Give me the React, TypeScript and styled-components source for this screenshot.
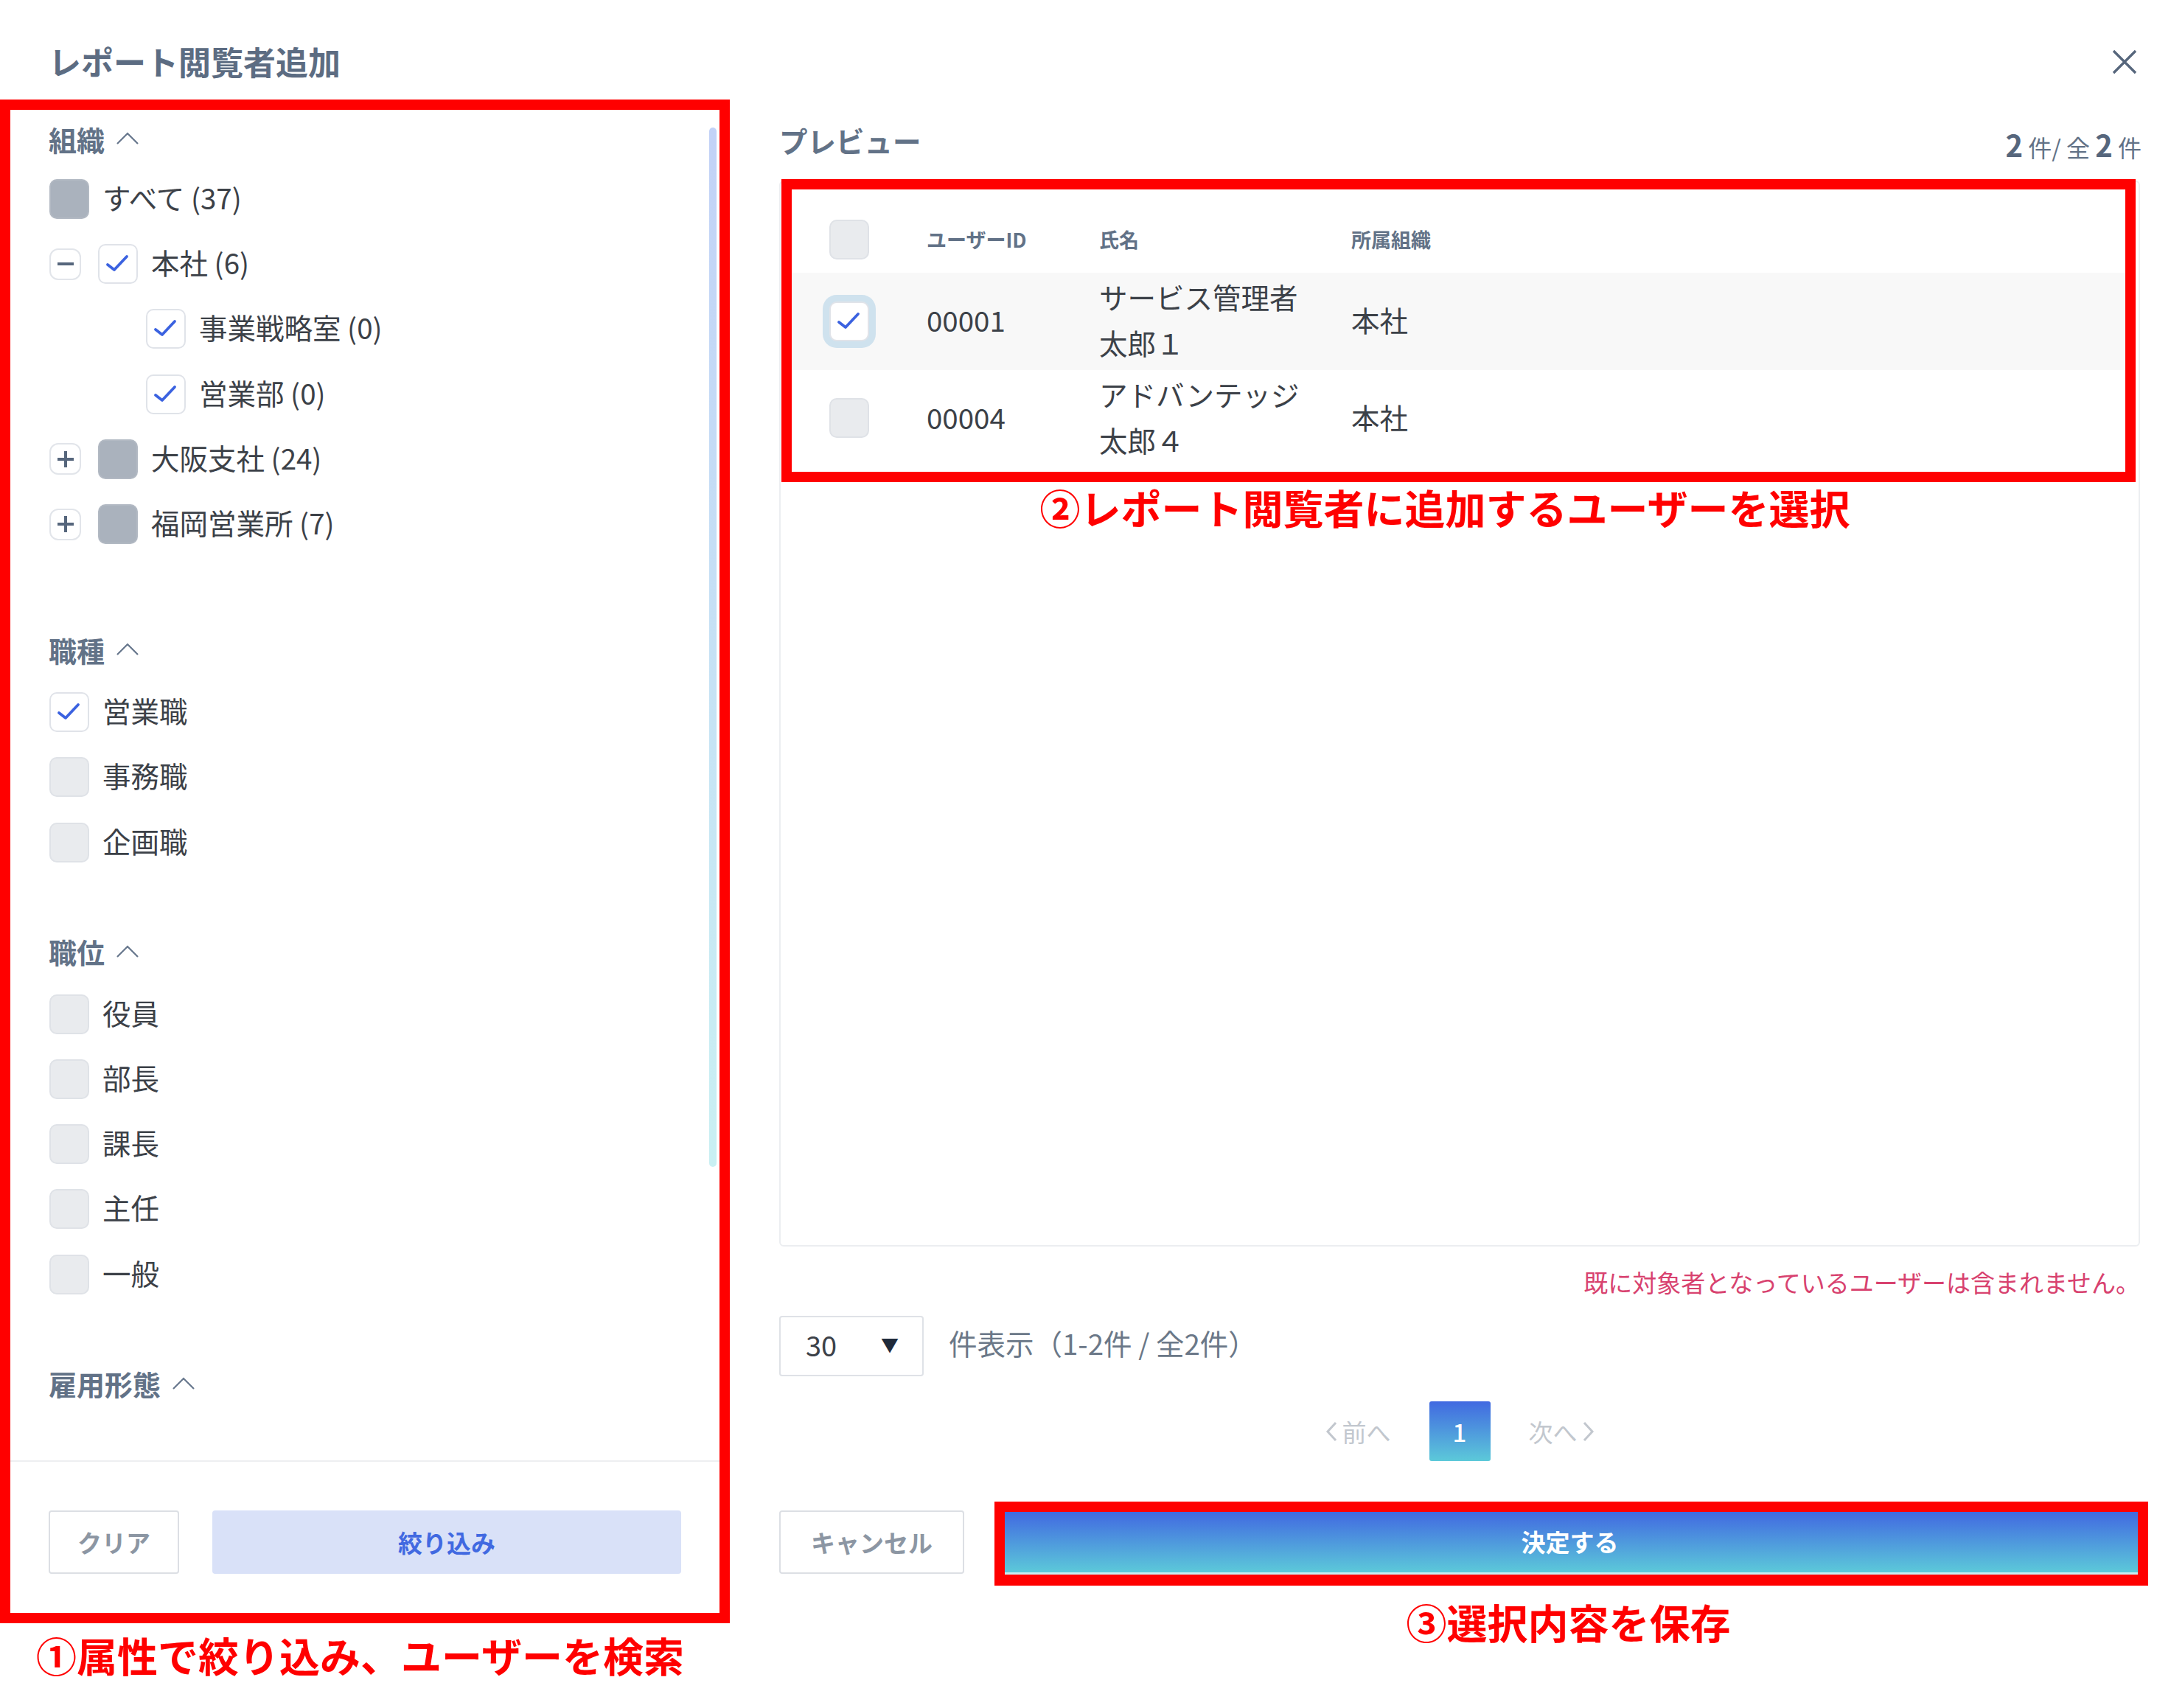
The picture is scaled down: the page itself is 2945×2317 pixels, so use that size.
import styled, { createGlobalStyle } from "styled-components";

const GlobalStyle = createGlobalStyle`
  html, body {
    margin: 0;
    padding: 0;
    background: #fff;
  }
  * {
    box-sizing: border-box;
  }
  body {
    font-family: "Noto Sans CJK JP", "Noto Sans", sans-serif;
    color: #3a3f47;
  }
`;

type BoxState = "on" | "off" | "mixed";

type OrgRow = {
  label: string;
  state: BoxState;
  toggle?: "plus" | "minus";
  nested?: boolean;
};

const orgRows: OrgRow[] = [
  { label: "すべて (37)", state: "mixed" },
  { label: "本社 (6)", state: "on", toggle: "minus" },
  { label: "事業戦略室 (0)", state: "on", nested: true },
  { label: "営業部 (0)", state: "on", nested: true },
  { label: "大阪支社 (24)", state: "mixed", toggle: "plus" },
  { label: "福岡営業所 (7)", state: "mixed", toggle: "plus" },
];

const jobRows: OrgRow[] = [
  { label: "営業職", state: "on" },
  { label: "事務職", state: "off" },
  { label: "企画職", state: "off" },
];

const rankRows: OrgRow[] = [
  { label: "役員", state: "off" },
  { label: "部長", state: "off" },
  { label: "課長", state: "off" },
  { label: "主任", state: "off" },
  { label: "一般", state: "off" },
];

const users = [
  { id: "00001", name: ["サービス管理者", "太郎１"], org: "本社", selected: true },
  { id: "00004", name: ["アドバンテッジ", "太郎４"], org: "本社", selected: false },
];

const Check = () => (
  <svg width="54" height="54" viewBox="0 0 54 54" fill="none">
    <polyline
      points="13,28 22,35 39,17"
      stroke="#3b62e0"
      strokeWidth="3.8"
      strokeLinecap="round"
      strokeLinejoin="round"
    />
  </svg>
);

const Chevron = () => (
  <svg width="32" height="18" viewBox="0 0 32 18" fill="none">
    <polyline points="2,16 16,2 30,16" stroke="#66768c" strokeWidth="2.2" />
  </svg>
);

const PageArrow = ({ dir }: { dir: "prev" | "next" }) => (
  <svg width="18" height="30" viewBox="0 0 18 30" fill="none">
    <polyline
      points={dir === "prev" ? "15,3 4,15 15,27" : "3,3 14,15 3,27"}
      stroke="#c2c7ce"
      strokeWidth="3"
    />
  </svg>
);

const Toggle = ({ kind }: { kind: "plus" | "minus" }) => (
  <ToggleBox>
    <svg width="42" height="42" viewBox="0 0 42 42" fill="none">
      <line x1="10" y1="21" x2="32" y2="21" stroke="#56667c" strokeWidth="4" />
      {kind === "plus" && (
        <line x1="21" y1="10" x2="21" y2="32" stroke="#56667c" strokeWidth="4" />
      )}
    </svg>
  </ToggleBox>
);

const FilterRows = ({ rows }: { rows: OrgRow[] }) => (
  <RowList>
    {rows.map((row) => (
      <FilterRow key={row.label} $nested={row.nested}>
        {row.toggle && <Toggle kind={row.toggle} />}
        <CheckBox $state={row.state}>{row.state === "on" && <Check />}</CheckBox>
        <RowLabel>{row.label}</RowLabel>
      </FilterRow>
    ))}
  </RowList>
);

const App = () => {
  return (
    <Page>
      <GlobalStyle />
      <Header>
        <Title>レポート閲覧者追加</Title>
        <svg width="36" height="36" viewBox="0 0 36 36" fill="none">
          <path d="M3 3 L33 33 M33 3 L3 33" stroke="#56667c" strokeWidth="3.4" />
        </svg>
      </Header>

      <Body>
        <LeftColumn>
          <FilterPanel>
            <ScrollArea>
              <FilterGroup $after={100}>
                <GroupHeading>
                  組織 <Chevron />
                </GroupHeading>
                <FilterRows rows={orgRows} />
              </FilterGroup>
              <FilterGroup $after={78} $inset={7}>
                <GroupHeading>
                  職種 <Chevron />
                </GroupHeading>
                <FilterRows rows={jobRows} />
              </FilterGroup>
              <FilterGroup $after={78} $inset={7}>
                <GroupHeading>
                  職位 <Chevron />
                </GroupHeading>
                <FilterRows rows={rankRows} />
              </FilterGroup>
              <FilterGroup $after={0}>
                <GroupHeading>
                  雇用形態 <Chevron />
                </GroupHeading>
              </FilterGroup>
              <ScrollThumb />
            </ScrollArea>
            <PanelFooter>
              <GhostButton $width={177}>クリア</GhostButton>
              <ApplyButton>絞り込み</ApplyButton>
            </PanelFooter>
          </FilterPanel>
          <Callout $left={49}>①属性で絞り込み、ユーザーを検索</Callout>
        </LeftColumn>

        <RightColumn>
          <PreviewHead>
            <PreviewTitle>プレビュー</PreviewTitle>
            <Count>
              <b>2</b> 件/ 全 <b>2</b> 件
            </Count>
          </PreviewHead>

          <PreviewPanel>
            <TableFrame>
              <TableHead>
                <BoxCell>
                  <CheckBox $state="off" />
                </BoxCell>
                <HeadCell>ユーザーID</HeadCell>
                <HeadCell>氏名</HeadCell>
                <HeadCell>所属組織</HeadCell>
              </TableHead>
              {users.map((user) => (
                <TableRow key={user.id} $selected={user.selected}>
                  <BoxCell>
                    <CheckBox $state={user.selected ? "on" : "off"} $focus={user.selected}>
                      {user.selected && <Check />}
                    </CheckBox>
                  </BoxCell>
                  <Cell>{user.id}</Cell>
                  <Cell>
                    {user.name.map((line) => (
                      <NameLine key={line}>{line}</NameLine>
                    ))}
                  </Cell>
                  <Cell>{user.org}</Cell>
                </TableRow>
              ))}
            </TableFrame>
            <CenterCallout>②レポート閲覧者に追加するユーザーを選択</CenterCallout>
          </PreviewPanel>

          <Notice>既に対象者となっているユーザーは含まれません。</Notice>

          <PageSizeRow>
            <PageSize>
              <span>30</span>
              <Caret>▼</Caret>
            </PageSize>
            <PageSizeLabel>件表示（1-2件 / 全2件）</PageSizeLabel>
          </PageSizeRow>

          <Pagination>
            <PageLink>
              <PageArrow dir="prev" />
              前へ
            </PageLink>
            <PageNumber>1</PageNumber>
            <PageLink>
              次へ
              <PageArrow dir="next" />
            </PageLink>
          </Pagination>

          <FooterRow>
            <CancelSlot>
              <GhostButton $width={251}>キャンセル</GhostButton>
            </CancelSlot>
            <SaveColumn>
              <SaveFrame>
                <SaveButton>決定する</SaveButton>
              </SaveFrame>
              <SaveCallout>③選択内容を保存</SaveCallout>
            </SaveColumn>
          </FooterRow>
        </RightColumn>
      </Body>
    </Page>
  );
};

export default App;

const Page = styled.div`
  width: 2945px;
  height: 2317px;
  background: #fff;
  overflow: hidden;
`;

const Header = styled.div`
  height: 135px;
  padding: 56px 45px 0 66px;
  display: flex;
  justify-content: space-between;
  align-items: flex-start;

  & > svg {
    margin-top: 10px;
  }
`;

const Title = styled.div`
  font-size: 44px;
  line-height: 54px;
  font-weight: 700;
  color: #5c6c82;
`;

const Body = styled.div`
  display: flex;
`;

const LeftColumn = styled.div`
  width: 990px;
  flex: none;
`;

const FilterPanel = styled.div`
  height: 2067px;
  border: 14px solid #ff0000;
  display: flex;
  flex-direction: column;
`;

const ScrollArea = styled.div`
  position: relative;
  height: 1832px;
  padding: 13px 0 0 52px;
  flex: none;
`;

const ScrollThumb = styled.div`
  position: absolute;
  top: 24px;
  right: 4px;
  width: 10px;
  height: 1410px;
  border-radius: 5px;
  background: linear-gradient(180deg, #c2d2f7 0%, #c9f0f3 100%);
`;

const FilterGroup = styled.div<{ $after: number; $inset?: number }>`
  margin-bottom: ${(p) => p.$after}px;

  & > div:last-child:not(:first-child) {
    margin-top: ${(p) => p.$inset ?? 4}px;
  }
`;

const GroupHeading = styled.div`
  height: 60px;
  padding-bottom: 8px;
  display: flex;
  align-items: center;
  gap: 15px;
  font-size: 38px;
  font-weight: 700;
  color: #627287;
`;

const RowList = styled.div`
  display: flex;
  flex-direction: column;
`;

const FilterRow = styled.div<{ $nested?: boolean }>`
  height: 88.2px;
  display: flex;
  align-items: center;
  padding-left: ${(p) => (p.$nested ? 132 : 1)}px;
`;

const ToggleBox = styled.div`
  width: 43px;
  height: 43px;
  flex: none;
  margin-right: 23px;
  border: 2px solid #e2e5ea;
  border-radius: 12px;
  background: #fff;
  display: flex;
  align-items: center;
  justify-content: center;

  & > svg {
    flex: none;
  }
`;

const boxColors = {
  on: { bg: "#ffffff", line: "#e0e3e9" },
  off: { bg: "#e9ebee", line: "#dfe2e7" },
  mixed: { bg: "#aab2bd", line: "#b2b9c3" },
};

const CheckBox = styled.div<{ $state: BoxState; $focus?: boolean }>`
  width: 54px;
  height: 54px;
  flex: none;
  border-radius: 10px;
  border: 2px solid ${(p) => boxColors[p.$state].line};
  background: ${(p) => boxColors[p.$state].bg};
  box-shadow: ${(p) => (p.$focus ? "0 0 0 9px #cfe2ee" : "none")};
  display: flex;
  align-items: center;
  justify-content: center;

  & > svg {
    flex: none;
  }
`;

const RowLabel = styled.span`
  margin-left: 18px;
  padding-bottom: 6px;
  font-size: 38.5px;
  line-height: 50px;
  color: #3c4148;
  white-space: nowrap;
`;

const PanelFooter = styled.div`
  flex: 1;
  border-top: 2px solid #eeeff1;
  padding: 66px 52px 0;
  display: flex;
  gap: 45px;
  align-items: flex-start;
`;

const GhostButton = styled.div<{ $width: number }>`
  width: ${(p) => p.$width}px;
  height: 86px;
  flex: none;
  border: 2px solid #dcdfe4;
  border-radius: 4px;
  background: #fff;
  display: flex;
  align-items: center;
  justify-content: center;
  font-size: 33px;
  font-weight: 700;
  color: #8c96a3;
`;

const ApplyButton = styled.div`
  flex: 1;
  height: 86px;
  border-radius: 4px;
  background: #d9e1f8;
  display: flex;
  align-items: center;
  justify-content: center;
  font-size: 33px;
  font-weight: 700;
  color: #4169e1;
`;

const Callout = styled.div<{ $left: number }>`
  margin: 7px 0 0 ${(p) => p.$left}px;
  font-size: 55px;
  line-height: 70px;
  font-weight: 700;
  color: #ff0000;
  white-space: nowrap;
`;

const RightColumn = styled.div`
  margin-left: 67px;
  width: 1857px;
  flex: none;
`;

const PreviewHead = styled.div`
  width: 1848px;
  height: 110px;
  padding-top: 30px;
  display: flex;
  justify-content: space-between;
  align-items: flex-start;
`;

const PreviewTitle = styled.div`
  font-size: 38.5px;
  line-height: 50px;
  font-weight: 700;
  color: #627287;
`;

const Count = styled.div`
  margin-top: 6px;
  font-size: 32px;
  line-height: 50px;
  color: #627287;

  & > b {
    font-size: 40px;
    font-weight: 700;
    color: #56667c;
  }
`;

const PreviewPanel = styled.div`
  width: 1846px;
  height: 1446px;
  border: 2px solid #eceef1;
  border-radius: 6px;
`;

const TableFrame = styled.div`
  margin: -4px 4px 0 1px;
  border: 14px solid #ff0000;
  padding: 22px 0 7px;
`;

const TableHead = styled.div`
  height: 91px;
  display: grid;
  grid-template-columns: 183px 234px 342px 1fr;
  align-items: center;
`;

const BoxCell = styled.div`
  padding-left: 51px;
`;

const HeadCell = styled.div`
  font-size: 27px;
  font-weight: 700;
  color: #627287;
`;

const TableRow = styled.div<{ $selected?: boolean }>`
  height: 131.5px;
  display: grid;
  grid-template-columns: 183px 234px 342px 1fr;
  align-items: center;
  background: ${(p) => (p.$selected ? "#f8f8f8" : "#fff")};
`;

const Cell = styled.div`
  padding-bottom: 5px;
  font-size: 38.5px;
  color: #3c4148;
  white-space: nowrap;
`;

const NameLine = styled.div`
  line-height: 62px;
`;

const CenterCallout = styled.div`
  margin-top: -2px;
  padding-right: 40px;
  text-align: center;
  font-size: 55px;
  line-height: 70px;
  font-weight: 700;
  color: #ff0000;
  white-space: nowrap;
`;

const Notice = styled.div`
  width: 1846px;
  margin-top: 28px;
  text-align: right;
  font-size: 33px;
  line-height: 40px;
  color: #d8426f;
`;

const PageSizeRow = styled.div`
  margin-top: 26px;
  display: flex;
  align-items: center;
  gap: 34px;
`;

const PageSize = styled.div`
  width: 196px;
  height: 82px;
  padding: 0 32px 6px 34px;
  border: 2px solid #dfe2e7;
  border-radius: 4px;
  display: flex;
  align-items: center;
  justify-content: space-between;
  font-size: 38px;
  color: #3c4148;
`;

const Caret = styled.span`
  font-size: 24px;
  color: #1f2a3a;
`;

const PageSizeLabel = styled.span`
  padding-bottom: 10px;
  font-size: 38.5px;
  color: #6b7888;
  white-space: nowrap;
`;

const Pagination = styled.div`
  width: 1846px;
  margin-top: 34px;
  height: 81px;
  display: flex;
  justify-content: center;
  align-items: center;
  gap: 52px;
`;

const PageLink = styled.div`
  display: flex;
  align-items: center;
  gap: 6px;
  font-size: 33px;
  color: #c2c7ce;
`;

const PageNumber = styled.div`
  width: 83px;
  height: 81px;
  border-radius: 3px;
  background: linear-gradient(180deg, #4169e1 0%, #5cc9d9 100%);
  display: flex;
  align-items: center;
  justify-content: center;
  font-size: 33px;
  font-weight: 500;
  color: #fff;
`;

const FooterRow = styled.div`
  margin-top: 55px;
  display: flex;
  gap: 41px;
`;

const CancelSlot = styled.div`
  padding-top: 12px;
`;

const SaveColumn = styled.div`
  flex: 1;
`;

const SaveFrame = styled.div`
  height: 114px;
  border: 14px solid #ff0000;
  border-bottom-width: 15px;
`;

const SaveButton = styled.div`
  height: 100%;
  padding: 0 4px 2px 0;
  border-bottom: 3px solid #c9eef2;
  background: linear-gradient(180deg, #4169e1 0%, #5cc9d9 100%);
  display: flex;
  align-items: center;
  justify-content: center;
  font-size: 33px;
  font-weight: 700;
  color: #fff;
`;

const SaveCallout = styled.div`
  margin-top: 13px;
  padding-right: 8px;
  text-align: center;
  font-size: 55px;
  line-height: 70px;
  font-weight: 700;
  color: #ff0000;
`;
